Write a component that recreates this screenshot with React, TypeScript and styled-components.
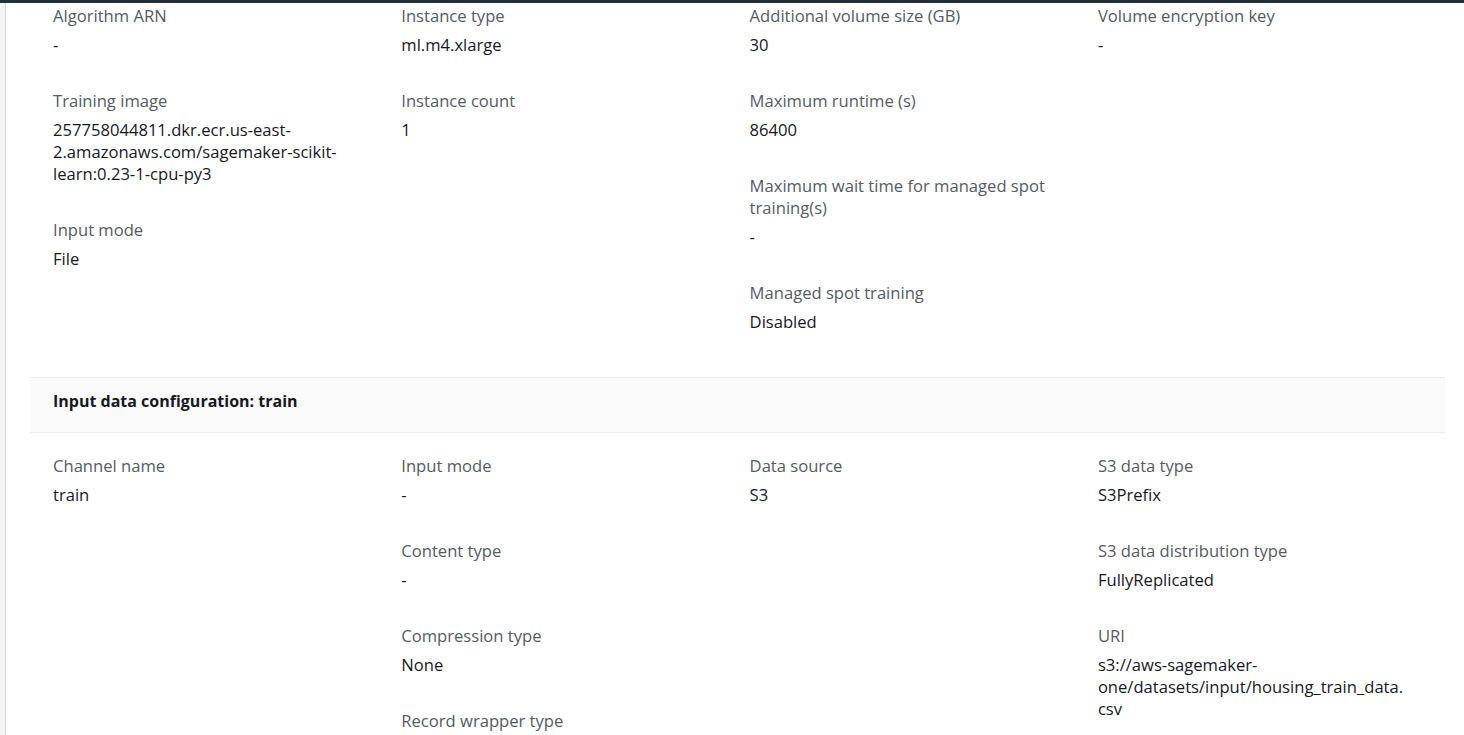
import React from "react";
import styled, { createGlobalStyle } from "styled-components";

const GlobalStyle = createGlobalStyle`
  html,
  body {
    margin: 0;
    padding: 0;
    overflow: hidden;
    background: #ffffff;
  }

  body {
    font-family: "Open Sans", "Noto Sans", sans-serif;
    font-size: 16.6px;
    line-height: 22px;
    color: #16191f;
  }
`;

const StyledPage = styled.div`
  display: flex;
  min-height: 100vh;
  border-top: 3px solid #232f3e;
  box-sizing: border-box;
`;

const SideRail = styled.div`
  width: 5px;
  flex-shrink: 0;
  background: #f2f3f3;
  border-right: 1px solid #d5dbdb;
`;

const Main = styled.main`
  flex: 1;
  min-width: 0;
  padding: 0 19px 0 24px;
`;

const StyledGrid = styled.div<{ top?: number; bottom?: number }>`
  display: grid;
  grid-template-columns: repeat(4, 348.3px);
  padding-top: ${(props) => props.top ?? 0}px;
  padding-bottom: ${(props) => props.bottom ?? 0}px;
`;

const StyledColumn = styled.div`
  display: flex;
  flex-direction: column;
  gap: 34px;
  padding: 0 17px 0 23px;
  min-width: 0;
`;

const StyledPair = styled.div`
  display: flex;
  flex-direction: column;
`;

const Label = styled.div`
  color: #545b64;
  margin-bottom: 7px;
`;

const Value = styled.div`
  color: #16191f;
  overflow-wrap: break-word;
`;

const SectionHeader = styled.div`
  background: #fafafa;
  border-top: 1px solid #eaeded;
  border-bottom: 1px solid #eaeded;
  padding: 12px 23px 20px;
  font-size: 16px;
  font-weight: 700;
  color: #16191f;
`;

type Pair = [string, string];

const jobColumns: Pair[][] = [
  [
    ["Algorithm ARN", "-"],
    [
      "Training image",
      "257758044811.dkr.ecr.us-east-2.amazonaws.com/sagemaker-scikit-learn:0.23-1-cpu-py3",
    ],
    ["Input mode", "File"],
  ],
  [
    ["Instance type", "ml.m4.xlarge"],
    ["Instance count", "1"],
  ],
  [
    ["Additional volume size (GB)", "30"],
    ["Maximum runtime (s)", "86400"],
    ["Maximum wait time for managed spot training(s)", "-"],
    ["Managed spot training", "Disabled"],
  ],
  [["Volume encryption key", "-"]],
];

const trainColumns: Pair[][] = [
  [["Channel name", "train"]],
  [
    ["Input mode", "-"],
    ["Content type", "-"],
    ["Compression type", "None"],
    ["Record wrapper type", "-"],
  ],
  [["Data source", "S3"]],
  [
    ["S3 data type", "S3Prefix"],
    ["S3 data distribution type", "FullyReplicated"],
    ["URI", "s3://aws-sagemaker-one/datasets/input/housing_train_data.csv"],
  ],
];

const KeyValueGrid = ({
  columns,
  top,
  bottom,
}: {
  columns: Pair[][];
  top?: number;
  bottom?: number;
}) => (
  <StyledGrid top={top} bottom={bottom}>
    {columns.map((column, i) => (
      <StyledColumn key={`col-${i}`}>
        {column.map(([label, value]) => (
          <StyledPair key={label}>
            <Label>{label}</Label>
            <Value>{value}</Value>
          </StyledPair>
        ))}
      </StyledColumn>
    ))}
  </StyledGrid>
);

const App = () => {
  return (
    <>
      <GlobalStyle />
      <StyledPage>
        <SideRail />
        <Main>
          <KeyValueGrid columns={jobColumns} top={2} bottom={44} />
          <SectionHeader>Input data configuration: train</SectionHeader>
          <KeyValueGrid columns={trainColumns} top={22} />
        </Main>
      </StyledPage>
    </>
  );
};

export default App;
